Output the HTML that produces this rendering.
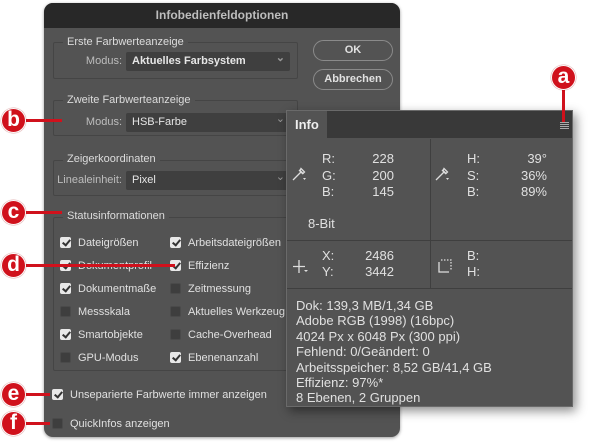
<!DOCTYPE html>
<html><head><meta charset="utf-8"><style>
*{margin:0;padding:0;box-sizing:border-box}
body{width:600px;height:445px;background:#fff;position:relative;overflow:hidden;font-family:"Liberation Sans",sans-serif;font-size:11px;color:#dcdcdc}
.a{position:absolute}
.dlg{left:44px;top:3px;width:356px;height:434px;background:#535353;border-radius:9px;overflow:hidden;box-shadow:0 1px 3px rgba(0,0,0,.4)}
.tb{left:0;top:0;width:356px;height:25px;background:#282828;text-align:center;line-height:25px;font-weight:bold;color:#bdbdbd;font-size:12px}
.grp{border:1px solid #454545;border-radius:2px}
.lbl{background:#535353;padding:0 4px;line-height:12px;white-space:nowrap}
.sel{background:#3f3f3f;height:19px;line-height:19px;padding-left:6px;color:#e6e6e6;border-radius:2px}
.sel:after{content:"⌄";position:absolute;right:5px;top:-3px;color:#999;font-size:11px}
.rl{text-align:right;line-height:19px;color:#bdbdbd}
.btn{border:1px solid #8a8a8a;border-radius:11px;text-align:center;line-height:19px;font-weight:bold;color:#e0e0e0}
.cb{width:11px;height:11px;border-radius:2px;background:#3e3e3e;border:1px solid #4a4a4a}
.cb.on{background:#e8e8e8;border-color:#e8e8e8}
.cb.on:after{content:"";position:absolute;left:3px;top:0px;width:3px;height:6px;border:solid #333;border-width:0 2px 2px 0;transform:rotate(40deg)}
.ct{line-height:12px;white-space:nowrap;color:#e0e0e0}
.info{left:286px;top:110px;width:287px;height:297px;background:#535353;border:1px solid #6a6a6a;box-shadow:3px 4px 10px rgba(0,0,0,.45)}
.ib{font-size:13px;color:#e0e0e0;line-height:16px;white-space:nowrap}
.r{text-align:right}
.red{background:#d0111c}
.circ{width:25px;height:25px;border-radius:50%;background:#d0111c;border:1px solid #fff;color:#fff;font-weight:bold;font-size:21px;text-align:center;line-height:22px;box-shadow:0 0 1px #900}
</style></head><body>
<div class="a dlg">
 <div class="a tb">Infobedienfeldoptionen</div>
 <div class="a grp" style="left:9px;top:39px;width:245px;height:37px"></div>
 <div class="a lbl" style="left:19px;top:33px">Erste Farbwerteanzeige</div>
 <div class="a rl" style="left:30px;top:49px;width:48px">Modus:</div>
 <div class="a sel" style="left:82px;top:49px;width:164px;font-weight:bold">Aktuelles Farbsystem</div>

 <div class="a grp" style="left:9px;top:97px;width:245px;height:36px"></div>
 <div class="a lbl" style="left:19px;top:91px">Zweite Farbwerteanzeige</div>
 <div class="a rl" style="left:30px;top:110px;width:48px">Modus:</div>
 <div class="a sel" style="left:82px;top:110px;width:164px">HSB-Farbe</div>

 <div class="a grp" style="left:9px;top:157px;width:245px;height:36px"></div>
 <div class="a lbl" style="left:19px;top:150px">Zeigerkoordinaten</div>
 <div class="a rl" style="left:0px;top:168px;width:78px">Linealeinheit:</div>
 <div class="a sel" style="left:82px;top:168px;width:164px">Pixel</div>

 <div class="a grp" style="left:9px;top:214px;width:260px;height:154px"></div>
 <div class="a lbl" style="left:19px;top:207px">Statusinformationen</div>

 <div class="a btn" style="left:269px;top:37px;width:80px;height:21px">OK</div>
 <div class="a btn" style="left:269px;top:66px;width:80px;height:21px">Abbrechen</div>

 <div class="a cb on" style="left:16px;top:234px"></div><div class="a ct" style="left:34px;top:234px">Dateigrößen</div>
 <div class="a cb on" style="left:16px;top:257px"></div><div class="a ct" style="left:34px;top:257px">Dokumentprofil</div>
 <div class="a cb on" style="left:16px;top:280px"></div><div class="a ct" style="left:34px;top:280px">Dokumentmaße</div>
 <div class="a cb" style="left:16px;top:303px"></div><div class="a ct" style="left:34px;top:303px">Messskala</div>
 <div class="a cb on" style="left:16px;top:326px"></div><div class="a ct" style="left:34px;top:326px">Smartobjekte</div>
 <div class="a cb" style="left:16px;top:349px"></div><div class="a ct" style="left:34px;top:349px">GPU-Modus</div>

 <div class="a cb on" style="left:126px;top:234px"></div><div class="a ct" style="left:144px;top:234px">Arbeitsdateigrößen</div>
 <div class="a cb on" style="left:126px;top:257px"></div><div class="a ct" style="left:144px;top:257px">Effizienz</div>
 <div class="a cb" style="left:126px;top:280px"></div><div class="a ct" style="left:144px;top:280px">Zeitmessung</div>
 <div class="a cb" style="left:126px;top:303px"></div><div class="a ct" style="left:144px;top:303px">Aktuelles Werkzeug</div>
 <div class="a cb" style="left:126px;top:326px"></div><div class="a ct" style="left:144px;top:326px">Cache-Overhead</div>
 <div class="a cb on" style="left:126px;top:349px"></div><div class="a ct" style="left:144px;top:349px">Ebenenanzahl</div>

 <div class="a cb on" style="left:8px;top:386px"></div><div class="a ct" style="left:26px;top:386px">Unseparierte Farbwerte immer anzeigen</div>
 <div class="a cb" style="left:8px;top:415px"></div><div class="a ct" style="left:26px;top:415px">QuickInfos anzeigen</div>
</div>

<div class="a info">
 <div class="a" style="left:0;top:0;width:285px;height:27px;background:#393939"></div>
 <div class="a" style="left:0;top:0;width:40px;height:28px;background:#535353;font-weight:bold;font-size:13px;color:#eee;line-height:27px;padding-left:8px">Info</div>
 <div class="a" style="left:273px;top:11px;width:9px;height:1px;background:#aaa;box-shadow:0 2px 0 #aaa,0 4px 0 #aaa,0 6px 0 #aaa"></div>
 <div class="a" style="left:143px;top:28px;width:1px;height:150px;background:#3f3f3f"></div>
 <div class="a" style="left:0;top:129px;width:285px;height:1px;background:#3f3f3f"></div>
 <div class="a" style="left:0;top:177px;width:285px;height:1px;background:#3f3f3f"></div>
 <svg class="a" style="left:5px;top:55px" width="16" height="16" viewBox="0 0 16 16" fill="none" stroke="#ddd" stroke-width="1.3"><path d="M2 13 L9 6 M7 4 L11 8 M9 2.5 L12.5 6 L11 7.5 L8 4.5Z M2 13l-1 1"/><path d="M11 12h3l-1.5 2z" fill="#ddd" stroke="none"/></svg>
 <svg class="a" style="left:148px;top:55px" width="16" height="16" viewBox="0 0 16 16" fill="none" stroke="#ddd" stroke-width="1.3"><path d="M2 13 L9 6 M7 4 L11 8 M9 2.5 L12.5 6 L11 7.5 L8 4.5Z M2 13l-1 1"/><path d="M11 12h3l-1.5 2z" fill="#ddd" stroke="none"/></svg>
 <div class="a ib" style="left:35px;top:40px;line-height:16.5px">R:<br>G:<br>B:</div>
 <div class="a ib r" style="left:70px;top:40px;width:37px;line-height:16.5px">228<br>200<br>145</div>
 <div class="a ib" style="left:180px;top:40px;line-height:16.5px">H:<br>S:<br>B:</div>
 <div class="a ib r" style="left:220px;top:40px;width:40px;line-height:16.5px">39°<br>36%<br>89%</div>
 <div class="a ib" style="left:21px;top:105px">8-Bit</div>
 <svg class="a" style="left:5px;top:147px" width="18" height="18" viewBox="0 0 18 18" stroke="#ddd" stroke-width="1.3"><path d="M7 2v13M1 8.5h12"/><path d="M12 12h4l-2 2z" fill="#ddd" stroke="none"/></svg>
 <svg class="a" style="left:150px;top:147px" width="16" height="16" viewBox="0 0 16 16" fill="none" stroke="#ddd" stroke-width="1.3"><path d="M2 4v10h10"/><path d="M4 2h10v10" stroke-dasharray="1.5 1.5"/></svg>
 <div class="a ib" style="left:35px;top:137px">X:<br>Y:</div>
 <div class="a ib r" style="left:60px;top:137px;width:47px">2486<br>3442</div>
 <div class="a ib" style="left:180px;top:137px">B:<br>H:</div>
 <div class="a ib" style="left:9px;top:187px;line-height:15.4px">Dok: 139,3 MB/1,34 GB<br>Adobe RGB (1998) (16bpc)<br>4024 Px x 6048 Px (300 ppi)<br>Fehlend: 0/Geändert: 0<br>Arbeitsspeicher: 8,52 GB/41,4 GB<br>Effizienz: 97%*<br>8 Ebenen, 2 Gruppen</div>
</div>

<div class="a red" style="left:562px;top:86px;width:3px;height:36px"></div>
<div class="a circ" style="left:551px;top:65px">a</div>
<div class="a red" style="left:20px;top:119px;width:42px;height:3px"></div>
<div class="a circ" style="left:1px;top:108px">b</div>
<div class="a red" style="left:20px;top:211px;width:42px;height:3px"></div>
<div class="a circ" style="left:1px;top:200px">c</div>
<div class="a red" style="left:20px;top:264px;width:155px;height:3px"></div>
<div class="a circ" style="left:1px;top:253px">d</div>
<div class="a red" style="left:20px;top:393px;width:30px;height:3px"></div>
<div class="a circ" style="left:1px;top:382px">e</div>
<div class="a red" style="left:20px;top:422px;width:30px;height:3px"></div>
<div class="a circ" style="left:1px;top:411px">f</div>
</body></html>
